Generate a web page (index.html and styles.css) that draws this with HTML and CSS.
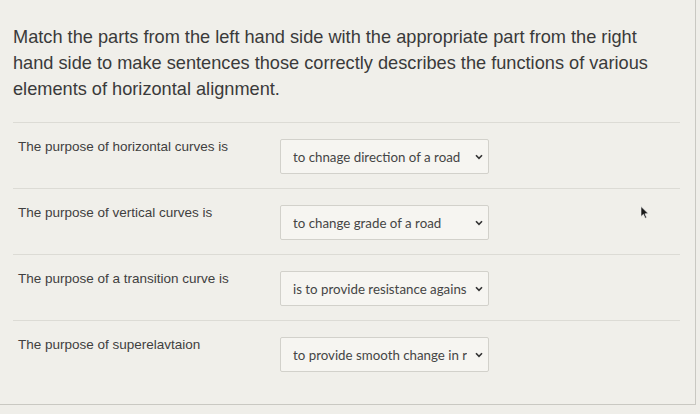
FILE: index.html
```html
<!DOCTYPE html>
<html>
<head>
<meta charset="utf-8">
<link rel="stylesheet" href="styles.css">
</head>
<body>
<div class="frame">
  <div class="content">
    <p class="question">Match the parts from the left hand side with the appropriate part from the right hand side to make sentences those correctly describes the functions of various elements of horizontal alignment.</p>
    <div class="row">
      <div class="label">The purpose of horizontal curves is</div>
      <div class="select"><span class="value">to chnage direction of a road</span><svg class="chev" viewBox="0 0 8 6" width="8" height="6"><path d="M1 1.2 L4 4.4 L7 1.2" fill="none" stroke="#333" stroke-width="1.6"/></svg></div>
    </div>
    <div class="row">
      <div class="label">The purpose of vertical curves is</div>
      <div class="select"><span class="value">to change grade of a road</span><svg class="chev" viewBox="0 0 8 6" width="8" height="6"><path d="M1 1.2 L4 4.4 L7 1.2" fill="none" stroke="#333" stroke-width="1.6"/></svg></div>
    </div>
    <div class="row">
      <div class="label">The purpose of a transition curve is</div>
      <div class="select"><span class="value">is to provide resistance agains</span><svg class="chev" viewBox="0 0 8 6" width="8" height="6"><path d="M1 1.2 L4 4.4 L7 1.2" fill="none" stroke="#333" stroke-width="1.6"/></svg></div>
    </div>
    <div class="row last">
      <div class="label">The purpose of superelavtaion</div>
      <div class="select"><span class="value">to provide smooth change in r</span><svg class="chev" viewBox="0 0 8 6" width="8" height="6"><path d="M1 1.2 L4 4.4 L7 1.2" fill="none" stroke="#333" stroke-width="1.6"/></svg></div>
    </div>
  </div>
  <svg class="cursor" viewBox="0 0 9 13" width="9" height="13"><path d="M1 0.5 L1 10.5 L3.4 8.3 L5.2 12.2 L6.6 11.6 L4.9 7.8 L8.2 7.6 Z" fill="#1a1a1a" stroke="#f0f0f0" stroke-width="0.6"/></svg>
</div>
</body>
</html>
```
FILE: styles.css
```css
html, body {
  margin: 0;
  padding: 0;
  background: #efeee9;
}
.frame {
  position: relative;
  width: 695px;
  height: 404px;
  border-right: 1px solid #c9c8c2;
  border-bottom: 1px solid #c9c8c2;
  background: #f0efea;
}
.content {
  padding: 24px 0 0 13px;
  width: 667px;
}
.question {
  margin: 0 0 20px 0;
  width: 660px;
  font-family: "Liberation Sans", Arial, sans-serif;
  font-size: 18.2px;
  line-height: 26px;
  color: #3a3a3a;
}
.row {
  display: flex;
  align-items: flex-start;
  border-top: 1px solid #dcdbd5;
  padding: 16px 0 14px 5px;
}
.row.last {
  padding-bottom: 32px;
}
.label {
  width: 262px;
  font-family: "Liberation Sans", Arial, sans-serif;
  font-size: 13.5px;
  line-height: 16px;
  color: #404040;
}
.select {
  box-sizing: border-box;
  width: 209px;
  height: 35px;
  border: 1px solid #d2d1cb;
  border-radius: 2px;
  background: #f6f5f1;
  display: flex;
  align-items: center;
  justify-content: space-between;
  padding: 0 5px 0 12px;
  font-family: Lato, "Liberation Sans", sans-serif;
  font-size: 13.3px;
  color: #454545;
}
.value {
  white-space: nowrap;
  overflow: hidden;
}
.chev {
  flex: none;
}
.cursor {
  position: absolute;
  left: 640px;
  top: 206px;
}
```
